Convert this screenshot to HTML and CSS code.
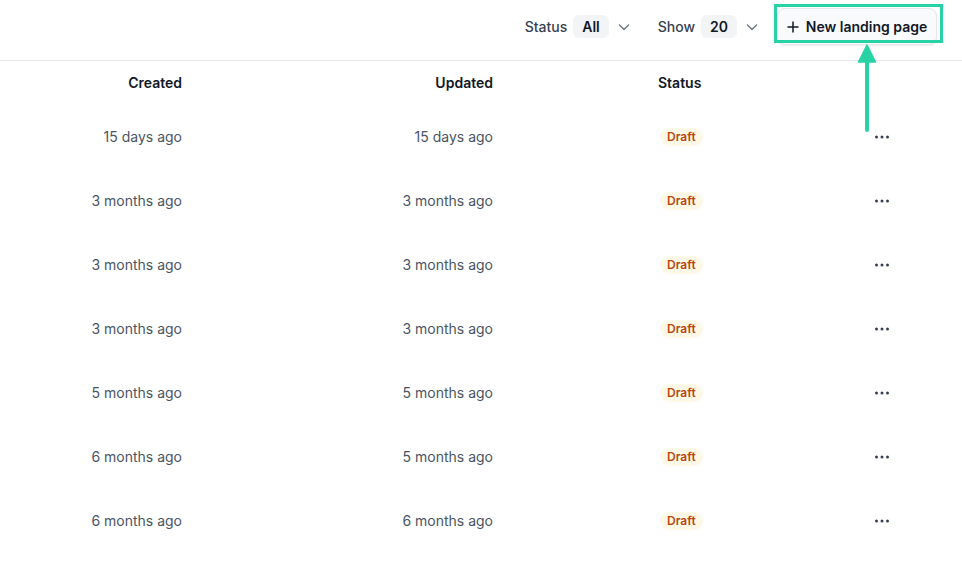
FILE: index.html
```html
<!DOCTYPE html>
<html lang="en">
  <head>
    <meta charset="UTF-8" />
    <meta name="viewport" content="width=device-width, initial-scale=1.0" />
    <title>Landing pages</title>
    <link rel="stylesheet" href="styles.css">
  </head>
  <body>
    <div class="wrapper">
      <!-- 상단 필터 바 -->
      <header class="topbar">
        <div class="filters">
          <div class="filter">
            <span class="filter_label">Status</span>
            <span class="filter_value">All</span>
            <button class="filter_toggle">
              <svg width="12" height="12" viewBox="0 0 12 12"><path d="M1.5 4l4.5 4.5L10.5 4" fill="none" stroke="#6b7280" stroke-width="1.3" stroke-linecap="round" stroke-linejoin="round"/></svg>
            </button>
          </div>
          <div class="filter">
            <span class="filter_label">Show</span>
            <span class="filter_value">20</span>
            <button class="filter_toggle">
              <svg width="12" height="12" viewBox="0 0 12 12"><path d="M1.5 4l4.5 4.5L10.5 4" fill="none" stroke="#6b7280" stroke-width="1.3" stroke-linecap="round" stroke-linejoin="round"/></svg>
            </button>
          </div>
        </div>
        <button class="btn_new">
          <svg width="12" height="12" viewBox="0 0 12 12"><path d="M6 0.5v11M0.5 6h11" stroke="#111827" stroke-width="1.5"/></svg>
          New landing page
        </button>
      </header>

      <!-- 목록 -->
      <main class="list">
        <div class="row row_head">
          <div class="cell cell_created">Created</div>
          <div class="cell cell_updated">Updated</div>
          <div class="cell cell_status">Status</div>
          <div class="cell cell_menu"></div>
        </div>
        <div class="row">
          <div class="cell cell_created">15 days ago</div>
          <div class="cell cell_updated">15 days ago</div>
          <div class="cell cell_status"><span class="badge">Draft</span></div>
          <div class="cell cell_menu"><svg width="16" height="4" viewBox="0 0 16 4"><circle cx="2.5" cy="2" r="1.5"/><circle cx="8" cy="2" r="1.5"/><circle cx="13.5" cy="2" r="1.5"/></svg></div>
        </div>
        <div class="row">
          <div class="cell cell_created">3 months ago</div>
          <div class="cell cell_updated">3 months ago</div>
          <div class="cell cell_status"><span class="badge">Draft</span></div>
          <div class="cell cell_menu"><svg width="16" height="4" viewBox="0 0 16 4"><circle cx="2.5" cy="2" r="1.5"/><circle cx="8" cy="2" r="1.5"/><circle cx="13.5" cy="2" r="1.5"/></svg></div>
        </div>
        <div class="row">
          <div class="cell cell_created">3 months ago</div>
          <div class="cell cell_updated">3 months ago</div>
          <div class="cell cell_status"><span class="badge">Draft</span></div>
          <div class="cell cell_menu"><svg width="16" height="4" viewBox="0 0 16 4"><circle cx="2.5" cy="2" r="1.5"/><circle cx="8" cy="2" r="1.5"/><circle cx="13.5" cy="2" r="1.5"/></svg></div>
        </div>
        <div class="row">
          <div class="cell cell_created">3 months ago</div>
          <div class="cell cell_updated">3 months ago</div>
          <div class="cell cell_status"><span class="badge">Draft</span></div>
          <div class="cell cell_menu"><svg width="16" height="4" viewBox="0 0 16 4"><circle cx="2.5" cy="2" r="1.5"/><circle cx="8" cy="2" r="1.5"/><circle cx="13.5" cy="2" r="1.5"/></svg></div>
        </div>
        <div class="row">
          <div class="cell cell_created">5 months ago</div>
          <div class="cell cell_updated">5 months ago</div>
          <div class="cell cell_status"><span class="badge">Draft</span></div>
          <div class="cell cell_menu"><svg width="16" height="4" viewBox="0 0 16 4"><circle cx="2.5" cy="2" r="1.5"/><circle cx="8" cy="2" r="1.5"/><circle cx="13.5" cy="2" r="1.5"/></svg></div>
        </div>
        <div class="row">
          <div class="cell cell_created">6 months ago</div>
          <div class="cell cell_updated">5 months ago</div>
          <div class="cell cell_status"><span class="badge">Draft</span></div>
          <div class="cell cell_menu"><svg width="16" height="4" viewBox="0 0 16 4"><circle cx="2.5" cy="2" r="1.5"/><circle cx="8" cy="2" r="1.5"/><circle cx="13.5" cy="2" r="1.5"/></svg></div>
        </div>
        <div class="row">
          <div class="cell cell_created">6 months ago</div>
          <div class="cell cell_updated">6 months ago</div>
          <div class="cell cell_status"><span class="badge">Draft</span></div>
          <div class="cell cell_menu"><svg width="16" height="4" viewBox="0 0 16 4"><circle cx="2.5" cy="2" r="1.5"/><circle cx="8" cy="2" r="1.5"/><circle cx="13.5" cy="2" r="1.5"/></svg></div>
        </div>
      </main>

      <!-- 주석 표시 (강조 박스 + 화살표) -->
      <div class="note_box"></div>
      <svg class="note_arrow" width="24" height="90" viewBox="0 0 24 90">
        <path d="M12 1L3.5 18h17z" fill="#27d3a5" stroke="#27d3a5" stroke-width="1.5" stroke-linejoin="round"/>
        <path d="M12 16v70" stroke="#27d3a5" stroke-width="4" stroke-linecap="round"/>
      </svg>
    </div>
  </body>
</html>
```

FILE: styles.css
```css
* {
  box-sizing: border-box;
}
body {
  margin: 0;
  font-family: Inter, "Noto Sans", sans-serif;
  font-size: 14px;
  color: #111827;
  background: #fff;
}
button {
  font-family: inherit;
  border: 0;
  background: none;
  padding: 0;
  cursor: pointer;
}

.wrapper {
  position: relative;
  height: 100vh;
}

/* 상단 바 */
.topbar {
  height: 61px;
  border-bottom: 1px solid #e5e7eb;
  display: flex;
  justify-content: flex-end;
  align-items: center;
  gap: 16px;
  padding: 0 25px 7px 0;
}
.topbar > .filters {
  display: flex;
  align-items: center;
  gap: 25px;
}
.topbar .filter {
  display: flex;
  align-items: center;
  gap: 6px;
}
.topbar .filter_label {
  color: #374151;
  font-weight: 500;
}
.topbar .filter_value {
  height: 23px;
  line-height: 23px;
  padding: 0 9px;
  border-radius: 6px;
  background: #f3f4f6;
  font-weight: 600;
  color: #111827;
}
.topbar .filter_toggle {
  width: 18px;
  height: 24px;
  display: flex;
  align-items: center;
  justify-content: center;
}
.topbar .btn_new {
  height: 37px;
  width: 160px;
  display: flex;
  align-items: center;
  justify-content: center;
  gap: 7px;
  border: 1px solid #e5e7eb;
  border-radius: 8px;
  background: #f9fafb;
  box-shadow: 0 1px 2px rgba(0, 0, 0, 0.08);
  font-size: 14px;
  font-weight: 600;
  color: #111827;
}

/* 목록 */
.list > .row {
  display: grid;
  grid-template-columns: 182px 311px 365px 48px;
  height: 64px;
  align-items: center;
}
.list > .row.row_head {
  height: 43.5px;
  padding-bottom: 1px;
  font-weight: 600;
  color: #111827;
}
.list > .row > .cell_created,
.list > .row > .cell_updated {
  text-align: right;
}
.list > .row:not(.row_head) > .cell {
  color: #4b5563;
}
.list > .row > .cell_status {
  padding-left: 165px;
}
.list > .row > .cell_menu {
  display: flex;
  justify-content: center;
}
.list > .row > .cell_menu svg {
  fill: #374151;
}
.badge {
  display: inline-block;
  margin-left: 2px;
  height: 18px;
  line-height: 18px;
  padding: 0 7px;
  border-radius: 9px;
  background: #fef8e7;
  color: #b9460f;
  font-size: 12px;
  font-weight: 600;
}

/* 주석 */
.note_box {
  position: absolute;
  left: 774px;
  top: 4px;
  width: 169px;
  height: 39px;
  border: 3px solid #27d3a5;
}
.note_arrow {
  position: absolute;
  left: 855px;
  top: 44px;
}
```
